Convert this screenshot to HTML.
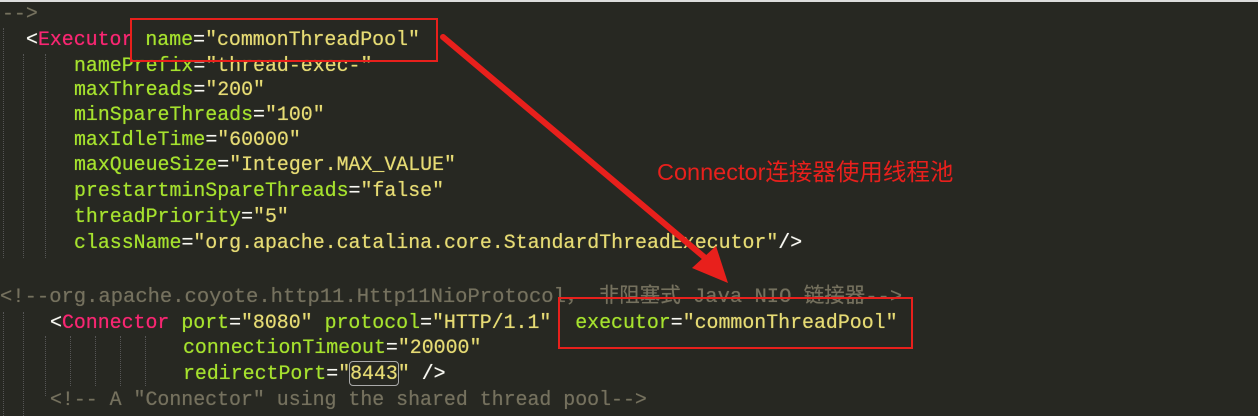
<!DOCTYPE html>
<html><head><meta charset="utf-8"><style>
html,body{margin:0;padding:0;background:#272822;width:1258px;height:416px;overflow:hidden}
.c{position:absolute;font-family:"Liberation Mono","DejaVu Sans Mono","Noto Sans CJK SC",monospace;font-size:19.9px;white-space:pre;line-height:24px;color:#f8f8f2;text-shadow:0 0 0.6px currentColor}
.t{color:#f92672}.a{color:#a6e22e}.s{color:#e6db74}.m{color:#75715e}.w{color:#f8f8f2}
.g{position:absolute;width:0;border-left:1px dotted #555;}
</style></head><body>
<div style="position:absolute;left:0;top:0;width:1258px;height:2px;background:#ddd"></div>
<div class="g" style="left:3px;top:28px;height:230px"></div>
<div class="g" style="left:23px;top:54px;height:204px"></div>
<div class="g" style="left:45px;top:54px;height:204px"></div>
<div class="g" style="left:3px;top:312px;height:104px"></div>
<div class="g" style="left:23px;top:312px;height:104px"></div>
<div class="g" style="left:45px;top:336px;height:60px"></div>
<div class="g" style="left:70px;top:336px;height:50px"></div>
<div class="g" style="left:95px;top:336px;height:50px"></div>
<div class="g" style="left:120px;top:336px;height:50px"></div>
<div class="g" style="left:145px;top:336px;height:50px"></div>

<div class="c m" style="left:2px;top:2px">--&gt;</div>
<div class="c" style="left:26px;top:28px"><span class="w">&lt;</span><span class="t">Executor</span> <span class="a">name</span>=<span class="s">"commonThreadPool"</span></div>
<div class="c" style="left:74px;top:54px"><span class="a">namePrefix</span>=<span class="s">"thread-exec-"</span></div>
<div class="c" style="left:74px;top:78px"><span class="a">maxThreads</span>=<span class="s">"200"</span></div>
<div class="c" style="left:74px;top:103px"><span class="a">minSpareThreads</span>=<span class="s">"100"</span></div>
<div class="c" style="left:74px;top:128px"><span class="a">maxIdleTime</span>=<span class="s">"60000"</span></div>
<div class="c" style="left:74px;top:153px"><span class="a">maxQueueSize</span>=<span class="s">"Integer.MAX_VALUE"</span></div>
<div class="c" style="left:74px;top:179px"><span class="a">prestartminSpareThreads</span>=<span class="s">"false"</span></div>
<div class="c" style="left:74px;top:205px"><span class="a">threadPriority</span>=<span class="s">"5"</span></div>
<div class="c" style="left:74px;top:231px"><span class="a">className</span>=<span class="s">"org.apache.catalina.core.StandardThreadExecutor"</span>/&gt;</div>

<div class="c m" style="left:0px;top:286px;font-size:20.5px">&lt;!--org.apache.coyote.http11.Http11NioProtocol， 非阻塞式 Java NIO 链接器--&gt;</div>
<div class="c" style="left:50px;top:311px"><span class="w">&lt;</span><span class="t">Connector</span> <span class="a">port</span>=<span class="s">"8080"</span> <span class="a">protocol</span>=<span class="s">"HTTP/1.1"</span>  <span class="a">executor</span>=<span class="s">"commonThreadPool"</span></div>
<div class="c" style="left:183px;top:336px"><span class="a">connectionTimeout</span>=<span class="s">"20000"</span></div>
<div class="c" style="left:183px;top:362px"><span class="a">redirectPort</span>=<span class="s">"<span style="outline:1px solid #aaa;border-radius:3px">8443</span>"</span> /&gt;</div>
<div class="c m" style="left:50px;top:388px">&lt;!-- A "Connector" using the shared thread pool--&gt;</div>

<div style="position:absolute;left:130px;top:18px;width:304px;height:40px;border:2px solid #e8201c"></div>
<div style="position:absolute;left:558px;top:297px;width:351px;height:48px;border:2px solid #e8201c"></div>
<div style="position:absolute;left:657px;top:153px;color:#e8201c;font:23.5px 'Liberation Sans','Noto Sans CJK SC',sans-serif">Connector连接器使用线程池</div>
<svg style="position:absolute;left:0;top:0" width="1258" height="416">
<line x1="443" y1="37" x2="710" y2="262" stroke="#e8201c" stroke-width="6" stroke-linecap="round"/>
<polygon points="728,283 692,268 716,246" fill="#e8201c"/>
</svg>
</body></html>
